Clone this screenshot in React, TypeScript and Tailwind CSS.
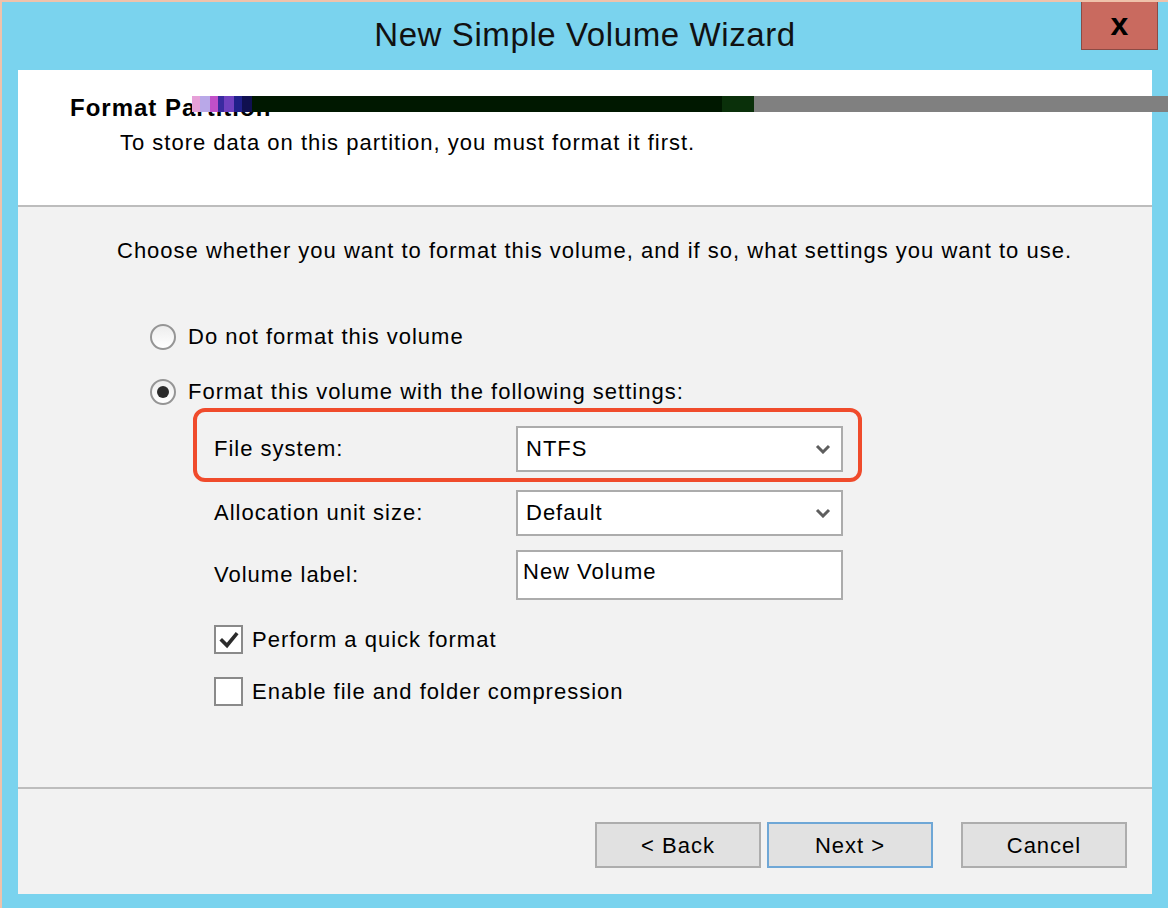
import { useState } from 'react'

const font = { fontFamily: '"Liberation Sans", Arial, sans-serif' }

function Radio({ checked }: { checked: boolean }) {
  return (
    <span className="w-[26px] h-[26px] rounded-full border-2 border-[#959595] bg-gradient-to-b from-[#ededed] to-white flex items-center justify-center shrink-0">
      {checked && <span className="w-[12px] h-[12px] rounded-full bg-[#2a2a2a]" />}
    </span>
  )
}

function Checkbox({ checked }: { checked: boolean }) {
  return (
    <span className="w-[29px] h-[29px] border-2 border-[#8a8a8a] bg-white flex items-center justify-center shrink-0">
      {checked && (
        <svg width="20" height="18" viewBox="0 0 20 18">
          <path d="M3 9.5 L8 14.5 L17 3.5" fill="none" stroke="#2b2b2b" strokeWidth="3.6" strokeLinecap="square" />
        </svg>
      )}
    </span>
  )
}

function Chevron() {
  return (
    <svg width="16" height="10" viewBox="0 0 16 10" className="shrink-0">
      <path d="M2 2 L8 8 L14 2" fill="none" stroke="#5e5e5e" strokeWidth="3" />
    </svg>
  )
}

function Select({ value }: { value: string }) {
  return (
    <div className="w-[327px] h-[46px] border-2 border-[#acacac] bg-white flex items-center justify-between pl-[8px] pr-[10px] text-[22px]">
      <span>{value}</span>
      <Chevron />
    </div>
  )
}

function Button({ label, focused }: { label: string; focused?: boolean }) {
  return (
    <button
      className={`w-[166px] h-[46px] border-2 bg-[#e1e1e1] text-[22px] tracking-[1px] text-black flex items-center justify-center ${
        focused ? 'border-[#6fa7d6]' : 'border-[#adadad]'
      }`}
    >
      {label}
    </button>
  )
}

export default function App() {
  const [format, setFormat] = useState(true)
  const [quick, setQuick] = useState(true)
  const [compress, setCompress] = useState(false)

  return (
    <div style={font} className="relative w-[1168px] h-[908px] bg-[#7ad3ee] border-t-2 border-l-2 border-[#efc2ab] flex flex-col text-black overflow-hidden">
      {/* title bar */}
      <div className="h-[68px] grid grid-cols-[1fr_auto_1fr] items-start shrink-0">
        <div />
        <div className="text-[33px] tracking-[0.6px] text-[#111] pt-[13px] leading-[40px]">New Simple Volume Wizard</div>
        <div className="flex justify-end pr-[10px]">
          <div className="w-[77px] h-[48px] bg-[#c96a5f] border border-t-0 border-[#8b4b45] flex items-center justify-center">
            <span className="text-[32px] font-bold leading-none -mt-[4px]">x</span>
          </div>
        </div>
      </div>

      {/* client area */}
      <div className="flex-1 ml-[16px] mr-[16px] mb-[14px] flex flex-col min-h-0">
        <div className="h-[137px] bg-white border-b-2 border-[#bdbdbd] shrink-0 pt-[24px]">
          <div className="pl-[52px] text-[24px] font-bold tracking-[1px] leading-[28px]">Format Partition</div>
          <div className="pl-[102px] mt-[7px] text-[22px] tracking-[1px] leading-[28px]">To store data on this partition, you must format it first.</div>
        </div>

        <div className="flex-1 bg-[#f2f2f2] pt-[30px] text-[22px] tracking-[1px] leading-[28px]">
          <div className="pl-[99px]">Choose whether you want to format this volume, and if so, what settings you want to use.</div>

          <div className="pl-[132px] mt-[58px] flex flex-col gap-[27px]">
            <label className="flex items-center gap-[12px]" onClick={() => setFormat(false)}>
              <Radio checked={!format} />
              <span>Do not format this volume</span>
            </label>
            <label className="flex items-center gap-[12px]" onClick={() => setFormat(true)}>
              <Radio checked={format} />
              <span>Format this volume with the following settings:</span>
            </label>
          </div>

          <div className="ml-[175px] mt-[2px] w-[669px]">
            <div className="border-4 border-[#f04b2c] rounded-[12px] pl-[17px] pr-[15px] pt-[14px] pb-[6px] flex items-center">
              <span className="w-[302px]">File system:</span>
              <Select value="NTFS" />
            </div>
            <div className="pl-[21px] mt-[8px] flex items-center">
              <span className="w-[302px]">Allocation unit size:</span>
              <Select value="Default" />
            </div>
            <div className="pl-[21px] mt-[14px] flex items-center">
              <span className="w-[302px]">Volume label:</span>
              <div className="w-[327px] h-[50px] border-2 border-[#acacac] bg-white pl-[5px] pt-[6px]">New Volume</div>
            </div>
            <div className="pl-[21px] mt-[25px] flex flex-col gap-[23px]">
              <label className="flex items-center gap-[9px]" onClick={() => setQuick(!quick)}>
                <Checkbox checked={quick} />
                <span>Perform a quick format</span>
              </label>
              <label className="flex items-center gap-[9px]" onClick={() => setCompress(!compress)}>
                <Checkbox checked={compress} />
                <span>Enable file and folder compression</span>
              </label>
            </div>
          </div>
        </div>

        <div className="h-[2px] bg-[#bdbdbd] shrink-0" />

        <div className="h-[105px] bg-[#f2f2f2] shrink-0 flex justify-end items-start pt-[33px] pr-[25px]">
          <div className="flex gap-[6px]">
            <Button label="< Back" />
            <Button label="Next >" focused />
          </div>
          <div className="ml-[28px]">
            <Button label="Cancel" />
          </div>
        </div>
      </div>

      {/* screen capture glitch band */}
      <div className="absolute left-[190px] right-0 top-[94px] h-[16px] flex">
        <div className="w-[60px] h-full flex">
          <div className="w-[8px] bg-[#e6a0d8]" />
          <div className="w-[10px] bg-[#b9a8e8]" />
          <div className="w-[8px] bg-[#c050c8]" />
          <div className="w-[6px] bg-[#3a2aa0]" />
          <div className="w-[10px] bg-[#7040c0]" />
          <div className="w-[8px] bg-[#20208a]" />
          <div className="w-[10px] bg-[#101050]" />
        </div>
        <div className="w-[470px] h-full bg-[#001800]" />
        <div className="w-[32px] h-full bg-[#0a300a]" />
        <div className="flex-1 h-full bg-[#808080]" />
      </div>
    </div>
  )
}
